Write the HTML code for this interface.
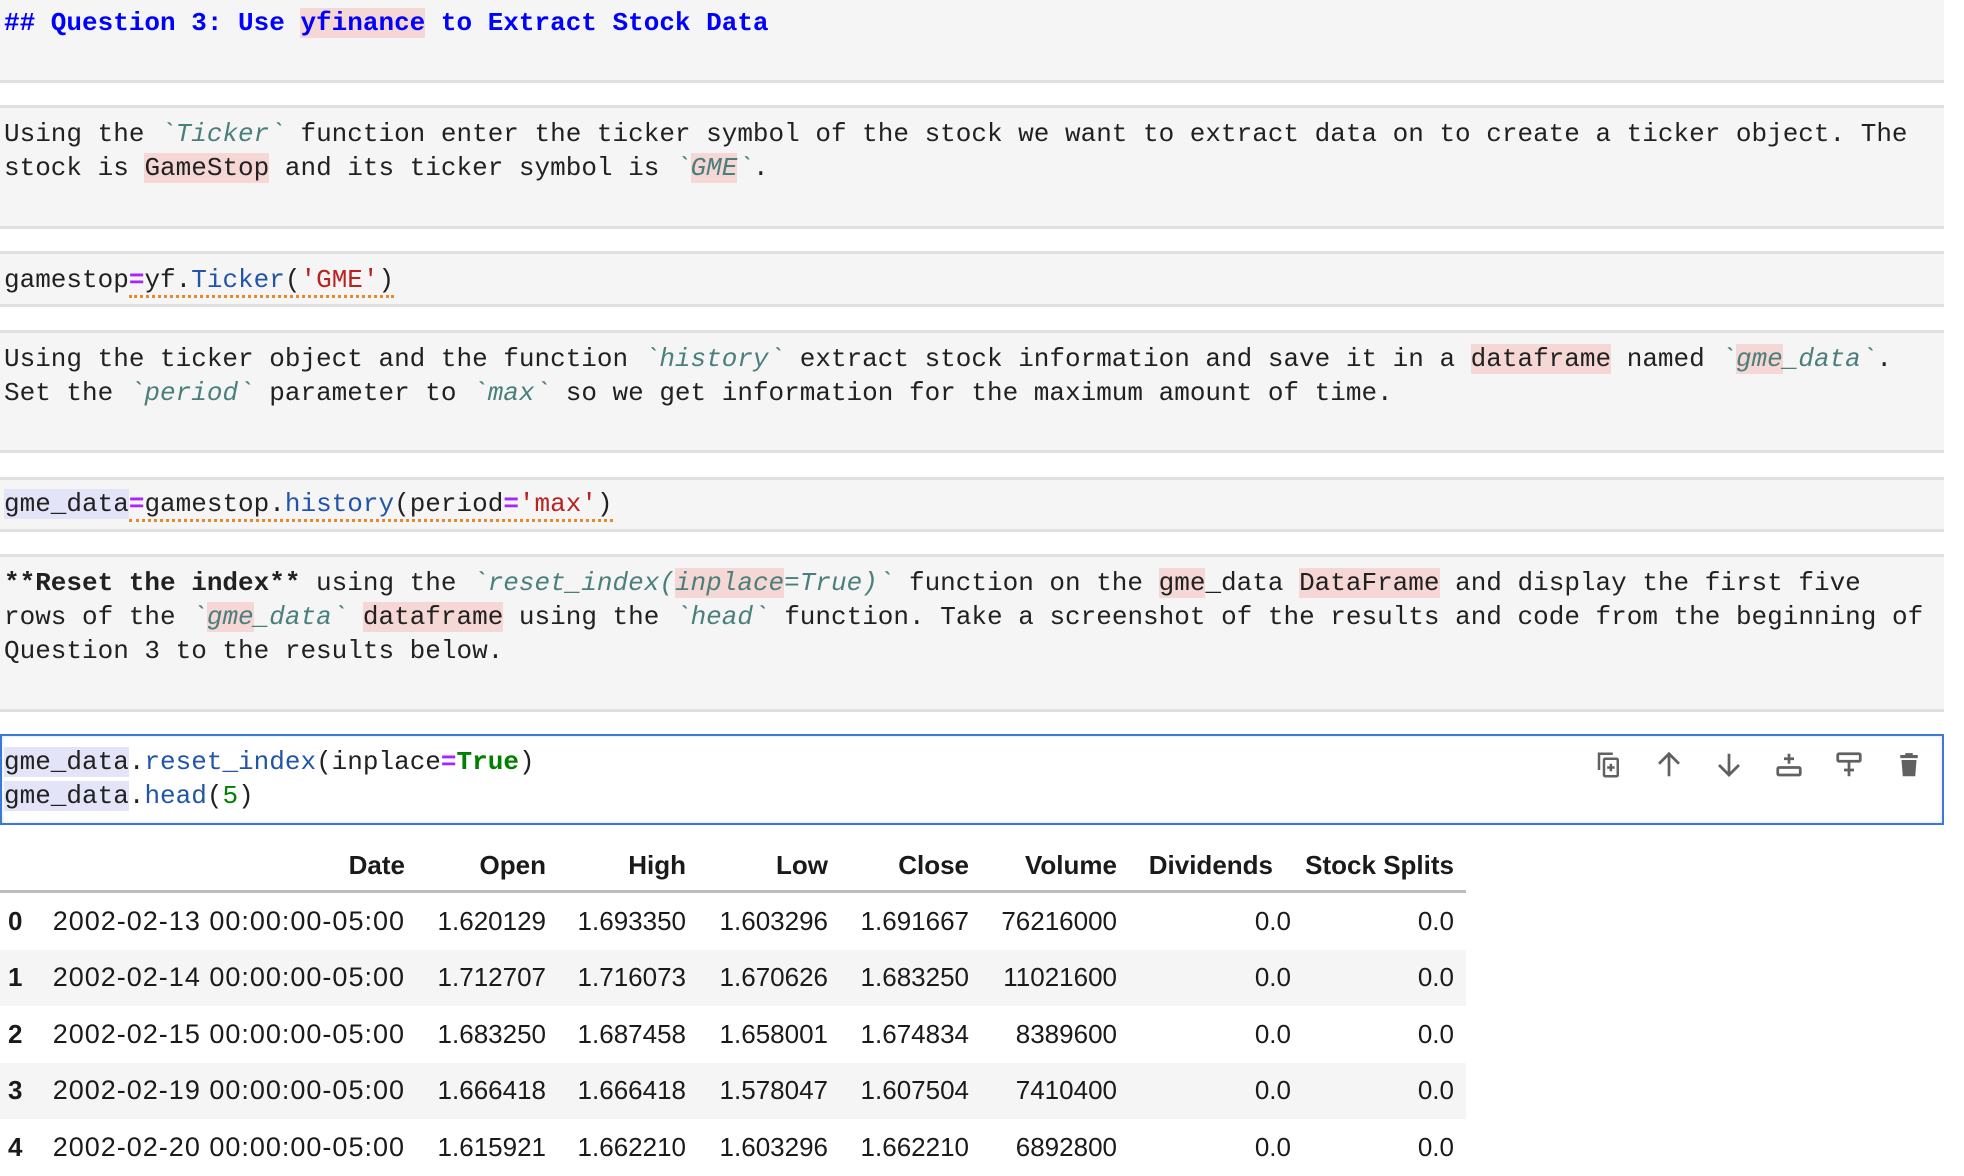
<!DOCTYPE html>
<html><head><meta charset="utf-8"><style>
body{margin:0;width:1964px;height:1165px;background:#fff;position:relative;overflow:hidden;font-family:"Liberation Mono","DejaVu Sans Mono",monospace;color:#212121}
.cell{position:absolute;left:0;width:1944px;background:#f5f5f5;border-bottom:3px solid #e0e0e0;border-top:3px solid #e0e0e0;box-sizing:border-box}
.ln{position:absolute;left:4px;font-size:26px;white-space:pre;line-height:34px}
.cd{font-size:26px}
.hl{background:#f5d7d5}
.bt{color:#4a7f7c;font-style:italic}
.v{background:#e3e4f7}
.eq{color:#aa22ff;font-weight:bold}
.fn{color:#2255aa}
.st{color:#ba2121}
.gr{color:#008000}
.ul{border-bottom:3px dotted #e8882a}
table{position:absolute;left:0;top:840px;border-collapse:collapse;font-family:"Liberation Sans",Arial,sans-serif;font-size:26px;color:#1a1a1a;width:1466px;table-layout:fixed}
th,td{text-align:right;padding:0 12px;height:56.5px;white-space:nowrap;overflow:visible}
th{font-weight:bold;height:50px;border-bottom:3px solid #bdbdbd;direction:rtl}
tbody tr:nth-child(even){background:#f5f5f5}
td.i{font-weight:bold;text-align:left;padding-left:8px}
td.d{font-size:27px;letter-spacing:1px}
.ic{position:absolute;top:750px}
</style></head><body>
<div class="cell" style="top:-3px;height:86px"></div>
<div class="ln" style="top:6px;color:#0000ff;font-weight:bold">## Question 3: Use <span class="hl">yfinance</span> to Extract Stock Data</div>

<div class="cell" style="top:105px;height:124px"></div>
<div class="ln" style="top:117px">Using the <span class="bt">`Ticker`</span> function enter the ticker symbol of the stock we want to extract data on to create a ticker object. The</div>
<div class="ln" style="top:151px">stock is <span class="hl">GameStop</span> and its ticker symbol is <span class="bt">`<span class="hl">GME</span>`</span>.</div>

<div class="cell" style="top:251px;height:56px"></div>
<div class="ln cd" style="top:263px">gamestop<span class="ul"><span class="eq">=</span>yf.<span class="fn">Ticker</span>(<span class="st">'GME'</span>)</span></div>

<div class="cell" style="top:330px;height:123px"></div>
<div class="ln" style="top:342px">Using the ticker object and the function <span class="bt">`history`</span> extract stock information and save it in a <span class="hl">dataframe</span> named <span class="bt">`<span class="hl">gme</span>_data`</span>.</div>
<div class="ln" style="top:376px">Set the <span class="bt">`period`</span> parameter to <span class="bt">`max`</span> so we get information for the maximum amount of time.</div>

<div class="cell" style="top:477px;height:55px"></div>
<div class="ln cd" style="top:487px"><span class="v">gme_data</span><span class="ul"><span class="eq">=</span>gamestop.<span class="fn">history</span>(period<span class="eq">=</span><span class="st">'max'</span>)</span></div>

<div class="cell" style="top:554px;height:158px"></div>
<div class="ln" style="top:566px"><b>**Reset the index**</b> using the <span class="bt">`reset_index(<span class="hl">inplace</span>=True)`</span> function on the <span class="hl">gme</span>_data <span class="hl">DataFrame</span> and display the first five</div>
<div class="ln" style="top:600px">rows of the <span class="bt">`<span class="hl">gme</span>_data`</span> <span class="hl">dataframe</span> using the <span class="bt">`head`</span> function. Take a screenshot of the results and code from the beginning of</div>
<div class="ln" style="top:634px">Question 3 to the results below.</div>

<div style="position:absolute;left:0;top:734px;width:1944px;height:91px;border:2px solid #3b78d8;box-sizing:border-box;background:#fff;box-shadow:inset 0 0 3px #cfe0f7"></div>
<div class="ln cd" style="top:745px"><span class="v">gme_data</span>.<span class="fn">reset_index</span>(inplace<span class="eq">=</span><span class="gr" style="font-weight:bold">True</span>)</div>
<div class="ln cd" style="top:779px"><span class="v">gme_data</span>.<span class="fn">head</span>(<span class="gr">5</span>)</div>

<svg class="ic" style="left:1594px" width="30" height="30" viewBox="0 0 24 24" fill="none" stroke="#616161" stroke-width="2"><path d="M4 16V3h11"/><rect x="8" y="7" width="11" height="14" rx="1"/><path d="M13.5 11v6M10.5 14h6"/></svg>
<svg class="ic" style="left:1654px" width="30" height="30" viewBox="0 0 24 24" fill="none" stroke="#616161" stroke-width="2.2"><path d="M12 21V4M4 11l8-8 8 8"/></svg>
<svg class="ic" style="left:1714px" width="30" height="30" viewBox="0 0 24 24" fill="none" stroke="#616161" stroke-width="2.2"><path d="M12 3v17M4 12l8 8 8-8"/></svg>
<svg class="ic" style="left:1774px" width="30" height="30" viewBox="0 0 24 24" fill="none" stroke="#616161" stroke-width="2.2"><rect x="3" y="14" width="18" height="6" rx="1"/><path d="M12 3v8M8 7h8"/></svg>
<svg class="ic" style="left:1834px" width="30" height="30" viewBox="0 0 24 24" fill="none" stroke="#616161" stroke-width="2.2"><rect x="3" y="3" width="18" height="6" rx="1"/><path d="M12 10v11M8 16h8"/></svg>
<svg class="ic" style="left:1894px" width="30" height="30" viewBox="0 0 24 24" fill="#616161"><rect x="5" y="4" width="14" height="2.5"/><rect x="9" y="2.5" width="6" height="2"/><path d="M6 8h12l-1 13H7z"/></svg>

<table>
<colgroup><col style="width:40px"><col style="width:377px"><col style="width:141px"><col style="width:140px"><col style="width:142px"><col style="width:141px"><col style="width:148px"><col style="width:174px"><col style="width:163px"></colgroup>
<thead><tr><th></th><th>Date</th><th>Open</th><th>High</th><th>Low</th><th>Close</th><th>Volume</th><th style="padding-right:30px">Dividends</th><th>Stock Splits</th></tr></thead>
<tbody>
<tr><td class="i">0</td><td class="d">2002-02-13 00:00:00-05:00</td><td>1.620129</td><td>1.693350</td><td>1.603296</td><td>1.691667</td><td>76216000</td><td>0.0</td><td>0.0</td></tr>
<tr><td class="i">1</td><td class="d">2002-02-14 00:00:00-05:00</td><td>1.712707</td><td>1.716073</td><td>1.670626</td><td>1.683250</td><td>11021600</td><td>0.0</td><td>0.0</td></tr>
<tr><td class="i">2</td><td class="d">2002-02-15 00:00:00-05:00</td><td>1.683250</td><td>1.687458</td><td>1.658001</td><td>1.674834</td><td>8389600</td><td>0.0</td><td>0.0</td></tr>
<tr><td class="i">3</td><td class="d">2002-02-19 00:00:00-05:00</td><td>1.666418</td><td>1.666418</td><td>1.578047</td><td>1.607504</td><td>7410400</td><td>0.0</td><td>0.0</td></tr>
<tr><td class="i">4</td><td class="d">2002-02-20 00:00:00-05:00</td><td>1.615921</td><td>1.662210</td><td>1.603296</td><td>1.662210</td><td>6892800</td><td>0.0</td><td>0.0</td></tr>
</tbody></table>
</body></html>
